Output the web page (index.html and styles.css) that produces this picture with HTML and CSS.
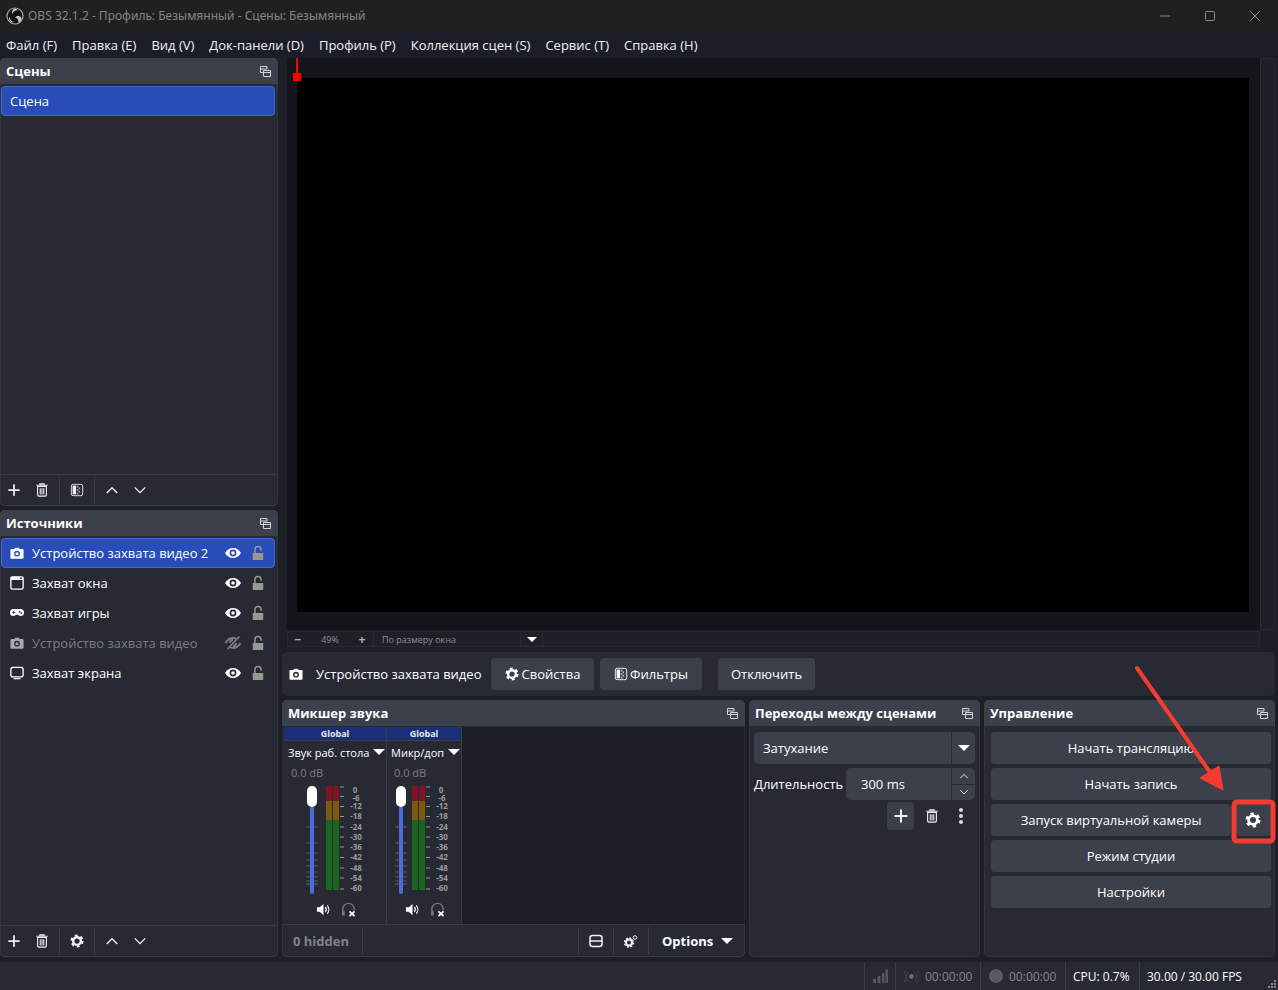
FILE: index.html

```html
<!DOCTYPE html>
<html lang="ru">
<head>
    <meta charset="UTF-8">
    <meta name="viewport" content="width=device-width, initial-scale=1.0">
    <title>OBS 32.1.2</title>
    <link rel="stylesheet" href="styles.css">
</head>
<body>
    <!-- Shared icons -->
    <svg class="icon-defs" width="0" height="0">
        <symbol id="i-plus" viewBox="0 0 16 16"><path d="M8 1.5v13M1.5 8h13" stroke="currentColor" stroke-width="2" fill="none"/></symbol>
        <symbol id="i-trash" viewBox="0 0 16 16"><path d="M1.5 2.5h13M5.5 2.5V1h5v1.5" stroke="currentColor" stroke-width="1.2" fill="none"/><path d="M3 4h10v9.5a1.5 1.5 0 0 1-1.500 1.500h-7a1.500 1.500 0 0 1-1.500-1.500z" stroke="currentColor" stroke-width="1.300" fill="none"/><path d="M6 6v7M8 6v7M10 6v7" stroke="currentColor" stroke-width="1.200"/></symbol>
        <symbol id="i-filter" viewBox="0 0 16 16"><rect x="1.500" y="1.500" width="13" height="13" rx="2" stroke="currentColor" fill="none"/><path d="M3 3h4v10H3z" fill="currentColor"/><path d="M8 3h1.500v2H8zM10 5h1.500v2H10zM8 7h1.500v2H8zM10 9h1.500v2H10zM8 11h1.500v2H8z" fill="currentColor" opacity=".7"/></symbol>
        <symbol id="i-up" viewBox="0 0 16 16"><path d="M2 11.500 8 5.500l6 6" stroke="currentColor" stroke-width="1.600" fill="none"/></symbol>
        <symbol id="i-down" viewBox="0 0 16 16"><path d="M2 5 8 11l6-6" stroke="currentColor" stroke-width="1.600" fill="none"/></symbol>
        <symbol id="i-gear" viewBox="0 0 16 16"><circle cx="8" cy="8" r="4.400" stroke="currentColor" stroke-width="2.800" fill="none"/><circle cx="8" cy="8" r="6.300" stroke="currentColor" stroke-width="2.400" stroke-dasharray="3.300 3.300" fill="none"/></symbol>
        <symbol id="i-undock" viewBox="0 0 11 11"><path d="M.5.500h6.500v2.500H.5zM.5 3v3.500h3M3.500 4.500h7v6h-7zM3.500 6.500h7" stroke="currentColor" fill="none"/></symbol>
        <symbol id="i-camera" viewBox="0 0 16 16"><path d="M1.500 3.500H5L6 2h4l1 1.500h3.500a1 1 0 0 1 1 1v9a1 1 0 0 1-1 1h-13a1 1 0 0 1-1-1v-9a1 1 0 0 1 1-1zM8 5.500a3.300 3.300 0 1 0 0 6.600 3.300 3.300 0 0 0 0-6.600zM8 7a1.800 1.800 0 1 1 0 3.600A1.800 1.800 0 0 1 8 7z" fill="currentColor" fill-rule="evenodd"/></symbol>
        <symbol id="i-window" viewBox="0 0 16 16"><rect x="1" y="1" width="14" height="14" rx="1.500" stroke="currentColor" stroke-width="1.500" fill="none"/><path d="M1 1h14v3.500H1z" fill="currentColor"/><path d="m11.500 1.500 2 2M13.500 1.500l-2 2" stroke="#272a33"/></symbol>
        <symbol id="i-game" viewBox="0 0 16 16"><path d="M4 3.500h8a4 4 0 0 1 0 8c-1.500 0-2-1.500-3-1.500H7c-1 0-1.500 1.500-3 1.500a4 4 0 0 1 0-8z" fill="currentColor"/><path d="M2.500 7.300h3.500M4.200 5.600v3.400" stroke="#272a33"/><circle cx="11" cy="6.500" r="1" fill="#272a33"/><circle cx="12.800" cy="8" r="1" fill="#272a33"/></symbol>
        <symbol id="i-screen" viewBox="0 0 16 16"><rect x="1" y="1.500" width="14" height="11" rx="2.500" stroke="currentColor" stroke-width="1.500" fill="none"/><path d="M4 14.500h8" stroke="currentColor" stroke-width="1.300"/></symbol>
        <symbol id="i-eye" viewBox="0 0 16 16"><path d="M0 8c2-3.500 4.800-5 8-5s6 1.500 8 5c-2 3.500-4.800 5-8 5s-6-1.500-8-5zm8-3.400a3.400 3.400 0 1 0 0 6.800 3.400 3.400 0 0 0 0-6.800zM8 6.200a1.800 1.800 0 1 1 0 3.600 1.800 1.800 0 0 1 0-3.600z" fill="currentColor" fill-rule="evenodd"/></symbol>
        <symbol id="i-eye-off" viewBox="0 0 16 16"><path d="M.5 8C2.500 4.500 5 3 8 3c1.200 0 2.300.200 3.300.700M15.500 8c-2 3.500-4.500 5-7.500 5-1.200 0-2.300-.200-3.300-.700M5 8a3 3 0 0 1 3-3M11 8a3 3 0 0 1-3 3" stroke="currentColor" stroke-width="1.800" fill="none"/><path d="M2.500 14 14.500 1.500" stroke="currentColor" stroke-width="1.800"/></symbol>
        <symbol id="i-lock" viewBox="0 0 16 16"><path d="M2 8h12v7a1 1 0 0 1-1 1H3a1 1 0 0 1-1-1z" fill="currentColor"/><path d="M4.500 8V4a3.500 3.500 0 0 1 7 0v1.500" stroke="currentColor" stroke-width="1.700" fill="none"/></symbol>
        <symbol id="i-speaker" viewBox="0 0 16 16"><path d="M1 5.500h3L8 2v12l-4-3.500H1z" fill="currentColor"/><path d="M10 5.500a4 4 0 0 1 0 5M12 3.500a7 7 0 0 1 0 9" stroke="currentColor" stroke-width="1.300" fill="none"/></symbol>
        <symbol id="i-headset" viewBox="0 0 16 16"><path d="M2 12V7.500a6 6 0 0 1 12 0V9" stroke="currentColor" stroke-width="1.500" fill="none"/><path d="M1 9.500h3v5H1z" fill="currentColor"/><path d="m9 10 5.500 5M14.500 10 9 15" stroke="#fff" stroke-width="1.800"/></symbol>
        <symbol id="i-fader" viewBox="0 0 18 110"><path d="M2 41h12M2 57h12M2 67h12M2 74h12M2 80h12M2 86h12M2 91h12M2 95h12M2 98h12" stroke="#5b5e68"/><rect x="6" y="20" width="4" height="88" rx="2" fill="#4a6cdc"/><rect x="3" y="0" width="10" height="21" rx="5" fill="#fff"/></symbol>
        <symbol id="i-meter" viewBox="0 0 18 110">
            <path d="M0 0h6v15H0zM7 0h6v15H7z" fill="#7d1426"/>
            <path d="M0 15h6v19H0zM7 15h6v19H7z" fill="#7b5a10"/>
            <path d="M0 34h6v70H0zM7 34h6v70H7z" fill="#1a6620"/>
            <path d="M14 1h4M14 10.500h4M14 20.500h4M14 30.500h4M14 41h4M14 51h4M14 61h4M14 71.500h4M14 82h4M14 92h4M14 103h4" stroke="#9a9a9a"/>
        </symbol>
    </svg>

    <!-- Title bar -->
    <header class="title-bar">
        <svg class="obs-logo" width="18" height="18" viewBox="0 0 18 18">
            <circle cx="9" cy="9" r="8" fill="#111" stroke="#a8a8a8" stroke-width="1.200"/>
            <path d="M9.500 1.500a3.600 3.600 0 0 0-3 5.500 4.500 4.500 0 0 1 5-3.500 4 4 0 0 0-2-2zM15.500 11a3.600 3.600 0 0 0-6.300-.500 4.500 4.500 0 0 1 3 5 4 4 0 0 0 3.300-4.500zM3 12a3.600 3.600 0 0 0 5.800 2.600 4.500 4.500 0 0 1-5.200-4.800A4 4 0 0 0 3 12z" fill="#c8c8c8"/>
        </svg>
        <span class="title-text">OBS 32.1.2 - Профиль: Безымянный - Сцены: Безымянный</span>
        <div class="win-controls">
            <svg width="10" height="10" viewBox="0 0 10 10"><path d="M0 5h10" stroke="#8c8c8c"/></svg>
            <svg width="10" height="10" viewBox="0 0 10 10"><rect x=".5" y=".5" width="9" height="9" rx="1" stroke="#8c8c8c" fill="none"/></svg>
            <svg width="10" height="10" viewBox="0 0 10 10"><path d="m0 0 10 10M10 0 0 10" stroke="#8c8c8c"/></svg>
        </div>
    </header>

    <!-- Menu -->
    <nav class="menu-bar">
        <span>Файл (F)</span>
        <span>Правка (E)</span>
        <span>Вид (V)</span>
        <span>Док-панели (D)</span>
        <span>Профиль (P)</span>
        <span>Коллекция сцен (S)</span>
        <span>Сервис (T)</span>
        <span>Справка (H)</span>
    </nav>

    <main class="workspace">
        <div class="left-col">
            <section class="dock">
                <div class="dock-head">
                    <h2>Сцены</h2>
                    <svg class="undock"><use href="#i-undock"/></svg>
                </div>
                <div class="list">
                    <div class="row selected"><span class="row-name">Сцена</span></div>
                </div>
                <div class="toolbar">
                    <button class="tool"><svg><use href="#i-plus"/></svg></button>
                    <button class="tool"><svg><use href="#i-trash"/></svg></button>
                    <i class="tool-sep"></i>
                    <button class="tool"><svg><use href="#i-filter"/></svg></button>
                    <i class="tool-sep"></i>
                    <button class="tool"><svg><use href="#i-up"/></svg></button>
                    <button class="tool"><svg><use href="#i-down"/></svg></button>
                </div>
            </section>

            <section class="dock">
                <div class="dock-head">
                    <h2>Источники</h2>
                    <svg class="undock"><use href="#i-undock"/></svg>
                </div>
                <div class="list">
                    <div class="row selected">
                        <svg class="src-icon"><use href="#i-camera"/></svg>
                        <span class="row-name">Устройство захвата видео 2</span>
                        <svg class="src-eye"><use href="#i-eye"/></svg>
                        <svg class="src-lock"><use href="#i-lock"/></svg>
                    </div>
                    <div class="row">
                        <svg class="src-icon"><use href="#i-window"/></svg>
                        <span class="row-name">Захват окна</span>
                        <svg class="src-eye"><use href="#i-eye"/></svg>
                        <svg class="src-lock"><use href="#i-lock"/></svg>
                    </div>
                    <div class="row">
                        <svg class="src-icon"><use href="#i-game"/></svg>
                        <span class="row-name">Захват игры</span>
                        <svg class="src-eye"><use href="#i-eye"/></svg>
                        <svg class="src-lock"><use href="#i-lock"/></svg>
                    </div>
                    <div class="row hidden-src">
                        <svg class="src-icon"><use href="#i-camera"/></svg>
                        <span class="row-name">Устройство захвата видео</span>
                        <svg class="src-eye"><use href="#i-eye-off"/></svg>
                        <svg class="src-lock"><use href="#i-lock"/></svg>
                    </div>
                    <div class="row">
                        <svg class="src-icon"><use href="#i-screen"/></svg>
                        <span class="row-name">Захват экрана</span>
                        <svg class="src-eye"><use href="#i-eye"/></svg>
                        <svg class="src-lock"><use href="#i-lock"/></svg>
                    </div>
                </div>
                <div class="toolbar">
                    <button class="tool"><svg><use href="#i-plus"/></svg></button>
                    <button class="tool"><svg><use href="#i-trash"/></svg></button>
                    <i class="tool-sep"></i>
                    <button class="tool"><svg><use href="#i-gear"/></svg></button>
                    <i class="tool-sep"></i>
                    <button class="tool"><svg><use href="#i-up"/></svg></button>
                    <button class="tool"><svg><use href="#i-down"/></svg></button>
                </div>
            </section>
        </div>

        <div class="right-col">
            <!-- Preview -->
            <div class="preview-wrap">
                <div class="preview-row">
                    <div class="preview">
                        <div class="canvas"></div>
                        <i class="handle-line"></i>
                        <i class="handle"></i>
                    </div>
                    <div class="preview-scroll"></div>
                </div>
                <div class="zoom-bar">
                    <span class="zoom-btn">−</span>
                    <span class="zoom-val">49%</span>
                    <span class="zoom-btn">+</span>
                    <span class="zoom-mode">По размеру окна</span>
                    <span class="zoom-arrow"><i class="caret small"></i></span>
                </div>
            </div>

            <!-- Context bar -->
            <div class="context-bar">
                <svg class="ctx-icon"><use href="#i-camera"/></svg>
                <span class="ctx-name">Устройство захвата видео</span>
                <button class="btn ctx-props"><svg><use href="#i-gear"/></svg>Свойства</button>
                <button class="btn ctx-filters"><svg><use href="#i-filter"/></svg>Фильтры</button>
                <button class="btn ctx-off">Отключить</button>
            </div>

            <!-- Bottom docks -->
            <div class="bottom-docks">
                <section class="dock mixer-dock">
                    <div class="dock-head">
                        <h2>Микшер звука</h2>
                        <svg class="undock"><use href="#i-undock"/></svg>
                    </div>
                    <div class="mixer">
                        <div class="channel ch-wide">
                            <div class="ch-tag">Global</div>
                            <div class="ch-name">Звук раб. стола<i class="caret"></i></div>
                            <div class="ch-db">0.0 dB</div>
                            <div class="ch-body">
                                <svg class="fader"><use href="#i-fader"/></svg>
                                <svg class="meter"><use href="#i-meter"/></svg>
                                <div class="scale">
                                    <span class="first">0</span><span class="second">-6</span><span>-12</span><span>-18</span><span>-24</span><span>-30</span><span>-36</span><span>-42</span><span>-48</span><span>-54</span><span>-60</span>
                                </div>
                            </div>
                            <div class="ch-foot">
                                <svg class="ch-speaker"><use href="#i-speaker"/></svg>
                                <svg class="ch-phones"><use href="#i-headset"/></svg>
                            </div>
                        </div>
                        <div class="channel ch-narrow">
                            <div class="ch-tag">Global</div>
                            <div class="ch-name">Микр/доп<i class="caret"></i></div>
                            <div class="ch-db">0.0 dB</div>
                            <div class="ch-body">
                                <svg class="fader"><use href="#i-fader"/></svg>
                                <svg class="meter"><use href="#i-meter"/></svg>
                                <div class="scale">
                                    <span class="first">0</span><span class="second">-6</span><span>-12</span><span>-18</span><span>-24</span><span>-30</span><span>-36</span><span>-42</span><span>-48</span><span>-54</span><span>-60</span>
                                </div>
                            </div>
                            <div class="ch-foot">
                                <svg class="ch-speaker"><use href="#i-speaker"/></svg>
                                <svg class="ch-phones"><use href="#i-headset"/></svg>
                            </div>
                        </div>
                    </div>
                    <div class="mixer-foot">
                        <span class="mix-hidden">0 hidden</span>
                        <i class="foot-sep"></i>
                        <span class="foot-space"></span>
                        <i class="foot-sep"></i>
                        <span class="foot-cell">
                            <svg width="14" height="14" viewBox="0 0 14 14"><rect x="1" y="1.500" width="12" height="11" rx="2.500" stroke="currentColor" stroke-width="1.500" fill="none"/><path d="M1 7h12" stroke="currentColor" stroke-width="1.500"/></svg>
                        </span>
                        <i class="foot-sep"></i>
                        <span class="foot-cell">
                            <svg width="14" height="14" viewBox="0 0 14 14"><circle cx="5" cy="8.500" r="3" stroke="currentColor" stroke-width="2" fill="none"/><circle cx="5" cy="8.500" r="4.500" stroke="currentColor" stroke-width="1.400" stroke-dasharray="2 1.500" fill="none"/><circle cx="11" cy="3.500" r="1.800" stroke="currentColor" fill="none"/></svg>
                        </span>
                        <i class="foot-sep"></i>
                        <span class="mix-options">Options<i class="caret"></i></span>
                    </div>
                </section>

                <section class="dock trans-dock">
                    <div class="dock-head">
                        <h2>Переходы между сценами</h2>
                        <svg class="undock"><use href="#i-undock"/></svg>
                    </div>
                    <div class="trans-body">
                        <div class="combo">
                            <span class="combo-text">Затухание</span>
                            <span class="combo-arrow"><i class="caret"></i></span>
                        </div>
                        <div class="trans-row">
                            <span class="trans-label">Длительность</span>
                            <div class="spin">
                                <span class="spin-text">300 ms</span>
                                <span class="spin-arrows">
                                    <span><svg><use href="#i-up"/></svg></span>
                                    <span><svg><use href="#i-down"/></svg></span>
                                </span>
                            </div>
                        </div>
                        <div class="trans-tools">
                            <button class="tool boxed"><svg><use href="#i-plus"/></svg></button>
                            <button class="tool"><svg><use href="#i-trash"/></svg></button>
                            <span class="dots"><i></i><i></i><i></i></span>
                        </div>
                    </div>
                </section>

                <section class="dock ctrl-dock">
                    <div class="dock-head">
                        <h2>Управление</h2>
                        <svg class="undock"><use href="#i-undock"/></svg>
                    </div>
                    <div class="ctrl-body">
                        <button class="btn">Начать трансляцию</button>
                        <button class="btn">Начать запись</button>
                        <div class="vcam-row">
                            <button class="btn vcam-main">Запуск виртуальной камеры</button>
                            <button class="btn vcam-gear"><svg><use href="#i-gear"/></svg></button>
                        </div>
                        <button class="btn">Режим студии</button>
                        <button class="btn">Настройки</button>
                    </div>
                </section>
            </div>
        </div>
    </main>

    <!-- Status bar -->
    <footer class="status-bar">
        <span class="stat stat-net">
            <svg width="16" height="16" viewBox="0 0 16 16"><path d="M1 11h3v4H1zM5.500 8h3v7h-3zM10 5h2.500v10H10zM13.500 1.500H16V15h-2.500z" fill="#55575e"/></svg>
        </span>
        <span class="stat stat-live">
            <svg width="15" height="15" viewBox="0 0 15 15"><circle cx="7.500" cy="7.500" r="2.400" fill="#6a6c72"/><path d="M4 3.500a5.500 5.500 0 0 0 0 8M11 3.500a5.500 5.500 0 0 1 0 8M2 1.500a8.500 8.500 0 0 0 0 12M13 1.500a8.500 8.500 0 0 1 0 12" stroke="#4a4c53" fill="none"/></svg>
            00:00:00
        </span>
        <span class="stat stat-rec"><i class="rec-dot"></i>00:00:00</span>
        <span class="stat stat-cpu">CPU: 0.7%</span>
        <span class="stat stat-fps">30.00 / 30.00 FPS</span>
        <svg class="grip" width="10" height="10" viewBox="0 0 10 10"><path d="M7 1h2v2H7zM4 4h2v2H4zM7 4h2v2H7zM1 7h2v2H1zM4 7h2v2H4zM7 7h2v2H7z" fill="#8b8d92"/></svg>
    </footer>

    <!-- Red annotation over the window -->
    <svg class="annot" width="1278" height="990" viewBox="0 0 1278 990">
        <path d="M1137 668 1214 778" stroke="#f63b30" stroke-width="4" stroke-linecap="round"/>
        <path d="M1223 790 1200 778 1219 766z" fill="#f63b30" stroke="#f63b30" stroke-linejoin="round"/>
        <rect x="1234" y="802" width="39" height="39" rx="3" fill="none" stroke="#f63b30" stroke-width="5"/>
    </svg>
</body>
</html>
```

FILE: styles.css

```css
* {
    margin: 0;
    padding: 0;
    box-sizing: border-box;
}

html, body {
    height: 990px;
    overflow: hidden;
}

body {
    font-family: "Open Sans", "Noto Sans", sans-serif;
    font-size: 13px;
    color: #fff;
    background-color: #1d1f26;
    display: flex;
    flex-direction: column;
    position: relative;
}

.icon-defs {
    position: absolute;
}

button {
    font: inherit;
    color: inherit;
    border: none;
    background: none;
}

/* Title bar */
.title-bar {
    height: 31px;
    flex-shrink: 0;
    background-color: #202020;
    display: flex;
    align-items: center;
    padding-left: 6px;
    border-top-right-radius: 8px;
    border-top-left-radius: 8px;
}

.obs-logo {
    margin-right: 4px;
}

.title-text {
    font-family: "Noto Sans", "Open Sans", sans-serif;
    font-size: 12px;
    color: #858585;
}

.win-controls {
    margin-left: auto;
    display: flex;
    gap: 35px;
    padding-right: 18px;
}

/* Menu */
.menu-bar {
    height: 27px;
    flex-shrink: 0;
    background-color: #1b1e29;
    display: flex;
    align-items: center;
    gap: 15px;
    padding-left: 6px;
    color: #f2f2f2;
}

.workspace {
    flex: 1;
    min-height: 0;
    display: flex;
    gap: 4px;
    padding-right: 3px;
}

.left-col {
    width: 278px;
    flex-shrink: 0;
    display: flex;
    flex-direction: column;
    gap: 4px;
}

.left-col .dock:first-child {
    height: 448px;
}

.left-col .dock:last-child {
    height: 447px;
}

.right-col {
    flex: 1;
    min-width: 0;
    display: flex;
    flex-direction: column;
}

/* Docks */
.dock {
    background-color: #272a33;
    border-radius: 5px;
    display: flex;
    flex-direction: column;
    box-shadow: inset 0 0 0 1px #32353e;
}

.dock-head {
    height: 26px;
    flex-shrink: 0;
    background-color: #3c404b;
    border-radius: 5px 5px 0 0;
    display: flex;
    align-items: center;
    justify-content: space-between;
    padding: 0 7px 0 6px;
}

.dock-head h2 {
    font-size: 13px;
    font-weight: 700;
}

.undock {
    width: 11px;
    height: 11px;
    color: #d4d4d6;
}

.list {
    flex: 1;
    padding: 2px 3px 0 1px;
}

.row {
    height: 30px;
    display: flex;
    align-items: center;
    padding-left: 8px;
    border: 1px solid transparent;
    border-radius: 4px;
}

.row.selected {
    background-color: #284cb8;
    border-color: #4468d0;
}

.row-name {
    flex: 1;
}

.src-icon {
    width: 14px;
    height: 14px;
    margin-right: 8px;
}

.src-eye {
    width: 16px;
    height: 16px;
    margin-right: 10px;
}

.src-lock {
    width: 14px;
    height: 16px;
    margin-right: 9px;
    color: #999791;
}

.hidden-src .row-name,
.hidden-src .src-icon,
.hidden-src .src-eye {
    color: #7c7e83;
    opacity: 1;
}

.hidden-src .src-icon {
    color: #a8a9ad;
}

/* Toolbars */
.toolbar {
    height: 32px;
    flex-shrink: 0;
    display: flex;
    align-items: center;
    border-top: 1px solid #3a3d47;
    border-bottom: 1px solid #3a3d47;
    border-radius: 0 0 5px 5px;
    padding-left: 0;
}

.tool {
    width: 28px;
    height: 28px;
    display: flex;
    align-items: center;
    justify-content: center;
    color: #f0f0f0;
}

.tool svg {
    width: 14px;
    height: 14px;
}

.tool-sep {
    width: 1px;
    height: 27px;
    background-color: #3a3d47;
    margin: 0 3px;
}

/* Preview */
.preview-wrap {
    flex: 1;
    min-height: 0;
    display: flex;
    flex-direction: column;
    padding-left: 5px;
}

.preview-row {
    flex: 1;
    display: flex;
}

.preview {
    flex: 1;
    background-color: #14151a;
    padding: 20px 11px 18px 10px;
    position: relative;
}

.canvas {
    height: 100%;
    background-color: #000;
}

.handle-line {
    position: absolute;
    left: 9px;
    top: 0;
    width: 2px;
    height: 20px;
    background-color: #f00;
}

.handle {
    position: absolute;
    left: 6px;
    top: 15px;
    width: 8px;
    height: 8px;
    background-color: #f00;
}

.preview-scroll {
    width: 15px;
    background-color: #1d2027;
    border: 1px solid #272a33;
}

.zoom-bar {
    height: 16px;
    margin-top: 1px;
    margin-right: 15px;
    display: flex;
    align-items: center;
    font-size: 9px;
    color: #8d8f94;
    background-color: #1d2027;
    border: 1px solid #272a33;
}

.zoom-btn {
    width: 20px;
    text-align: center;
    font-size: 12px;
    font-weight: 700;
    color: #b0b0b0;
}

.zoom-val {
    width: 44px;
    text-align: center;
}

.zoom-mode {
    width: 147px;
    height: 100%;
    display: flex;
    align-items: center;
    padding-left: 8px;
    margin-left: 1px;
    border-left: 1px solid #272a33;
}

.zoom-arrow {
    width: 23px;
    height: 100%;
    display: flex;
    align-items: center;
    justify-content: center;
    border: solid #272a33;
    border-width: 0 1px;
}

.caret {
    display: inline-block;
    width: 0;
    height: 0;
    border-left: 6px solid transparent;
    border-right: 6px solid transparent;
    border-top: 6px solid #fff;
}

.caret.small {
    border-left-width: 5px;
    border-right-width: 5px;
    border-top-width: 5px;
}

/* Context bar */
.context-bar {
    height: 44px;
    flex-shrink: 0;
    margin-top: 5px;
    background-color: #272a33;
    border-radius: 5px;
    display: flex;
    align-items: center;
    padding-left: 7px;
}

.ctx-icon {
    width: 14px;
    height: 14px;
    margin-right: 13px;
}

.ctx-name {
    width: 175px;
}

.btn {
    height: 32px;
    background-color: #3c404b;
    border-radius: 4px;
    display: flex;
    align-items: center;
    justify-content: center;
    flex-shrink: 0;
}

.ctx-props {
    width: 103px;
    gap: 3px;
}

.ctx-filters {
    width: 102px;
    margin-left: 6px;
    gap: 2px;
}

.ctx-off {
    width: 97px;
    margin-left: 16px;
}

.ctx-props svg,
.ctx-filters svg {
    width: 14px;
    height: 14px;
}

/* Bottom docks */
.bottom-docks {
    height: 257px;
    flex-shrink: 0;
    margin-top: 4px;
    margin-bottom: 5px;
    display: flex;
    gap: 4px;
}

.mixer-dock {
    width: 463px;
}

.trans-dock {
    width: 231px;
}

.ctrl-dock {
    flex: 1;
}

/* Mixer */
.mixer {
    flex: 1;
    min-height: 0;
    display: flex;
    padding: 1px 0 0 2px;
    background-color: #272a33;
}

.channel {
    border-right: 1px solid #3a3d47;
    display: flex;
    flex-direction: column;
    background-color: #272a33;
}

.ch-wide {
    width: 103px;
}

.ch-narrow {
    width: 75px;
}

.mixer::after {
    content: "";
    flex: 1;
    background-color: #1d1f26;
    margin-right: 1px;
}

.ch-tag {
    height: 14px;
    flex-shrink: 0;
    background-color: #1a2f78;
    color: #e8e8e8;
    font-size: 9px;
    font-weight: 700;
    line-height: 14px;
    text-align: center;
    border-bottom: 1px solid #3a3d47;
}

.ch-name {
    height: 22px;
    flex-shrink: 0;
    font-size: 11px;
    display: flex;
    align-items: center;
    justify-content: space-between;
    padding: 0 1px 0 4px;
    white-space: nowrap;
}

.ch-db {
    height: 20px;
    flex-shrink: 0;
    font-size: 11px;
    line-height: 20px;
    color: #7d7f85;
    padding-left: 7px;
}

.ch-body {
    height: 110px;
    margin-top: 3px;
    display: flex;
    flex-shrink: 0;
}

.fader {
    width: 18px;
    height: 110px;
    margin-left: 20px;
}

.meter {
    width: 18px;
    height: 110px;
    margin-left: 4px;
}

.ch-narrow .fader {
    margin-left: 6px;
}

.ch-narrow .meter {
    margin-left: -2px;
    margin-left: 1px;
}

.scale {
    display: flex;
    flex-direction: column;
    font-size: 8px;
    font-weight: 700;
    color: #9a9a9a;
    margin-left: 2px;
    width: 20px;
}

.scale span {
    height: 10.3px;
    line-height: 10.3px;
    text-align: center;
}

.scale .first {
    height: 8px;
    line-height: 8px;
    margin-left: -2px;
}

.scale .second {
    height: 7px;
    line-height: 7px;
}

.ch-foot {
    display: flex;
    align-items: center;
    gap: 10px;
    padding-left: 32px;
    margin-top: 6px;
}

.ch-narrow .ch-foot {
    padding-left: 18px;
}

.ch-speaker,
.ch-phones {
    width: 15px;
    height: 15px;
}

.ch-phones {
    color: #74767b;
}

.mixer-foot {
    height: 33px;
    flex-shrink: 0;
    display: flex;
    align-items: center;
    border-top: 1px solid #3a3d47;
    border-bottom: 1px solid #3a3d47;
    border-radius: 0 0 5px 5px;
}

.mix-hidden {
    width: 80px;
    padding-left: 11px;
    font-weight: 700;
    color: #80828a;
}

.foot-sep {
    width: 1px;
    height: 27px;
    background-color: #3a3d47;
}

.foot-space {
    width: 215px;
}

.foot-cell {
    width: 34px;
    display: flex;
    justify-content: center;
    color: #f0f0f0;
}

.mix-options {
    flex: 1;
    display: flex;
    align-items: center;
    gap: 8px;
    padding-left: 13px;
    font-weight: 700;
}

/* Transitions */
.trans-body {
    padding: 6px 5px 0;
    display: flex;
    flex-direction: column;
    gap: 4px;
}

.combo {
    height: 32px;
    background-color: #3c404b;
    border-radius: 5px;
    display: flex;
    align-items: center;
}

.combo-text {
    flex: 1;
    padding-left: 9px;
}

.combo-arrow {
    width: 24px;
    height: 100%;
    display: flex;
    align-items: center;
    justify-content: center;
    border-left: 1px solid #272a33;
}

.trans-row {
    display: flex;
    align-items: center;
    gap: 4px;
}

.trans-label {
    width: 88px;
    white-space: nowrap;
}

.spin {
    flex: 1;
    height: 32px;
    background-color: #3c404b;
    border-radius: 5px;
    display: flex;
    align-items: center;
}

.spin-text {
    flex: 1;
    padding-left: 15px;
}

.spin-arrows {
    width: 24px;
    height: 100%;
    display: flex;
    flex-direction: column;
    border-left: 1px solid #272a33;
}

.spin-arrows span {
    flex: 1;
    display: flex;
    align-items: center;
    justify-content: center;
    color: #e8e8e8;
}

.spin-arrows span:first-child {
    border-bottom: 1px solid #272a33;
}

.spin-arrows svg {
    width: 10px;
    height: 10px;
}

.trans-tools {
    display: flex;
    justify-content: flex-end;
    align-items: center;
    margin-top: -2px;
    padding-right: 0;
}

.tool.boxed {
    background-color: #3c404b;
    border-radius: 4px;
    width: 27px;
}

.tool.boxed svg {
    width: 16px;
    height: 16px;
}

.trans-tools .tool:nth-child(2) {
    margin-left: 4px;
}

.dots {
    width: 28px;
    display: flex;
    flex-direction: column;
    align-items: center;
    gap: 2px;
    margin-left: 1px;
}

.dots i {
    width: 4px;
    height: 4px;
    border-radius: 50%;
    background-color: #dcdcdc;
}

/* Controls */
.ctrl-body {
    padding: 6px 4px 0 7px;
    display: flex;
    flex-direction: column;
    gap: 4px;
}

.vcam-row {
    display: flex;
    gap: 4px;
}

.vcam-main {
    flex: 1;
}

.vcam-gear {
    width: 36px;
}

.vcam-gear svg {
    width: 16px;
    height: 16px;
}

/* Status bar */
.status-bar {
    height: 28px;
    flex-shrink: 0;
    background-color: #272a33;
    display: flex;
    align-items: center;
    justify-content: flex-end;
    position: relative;
    color: #fff;
    font-size: 12px;
}

.stat {
    height: 100%;
    display: flex;
    align-items: center;
    gap: 6px;
    border-left: 1px solid #3a3d47;
    padding-left: 7px;
    white-space: nowrap;
}

.stat-net {
    width: 31px;
}

.stat-live {
    width: 85px;
    color: #85878c;
    padding-left: 8px;
}

.stat-rec {
    width: 85px;
    color: #85878c;
    padding-left: 8px;
}

.stat-cpu {
    width: 74px;
}

.stat-fps {
    width: 139px;
}

.rec-dot {
    width: 14px;
    height: 14px;
    border-radius: 50%;
    background-color: #585a62;
}

.grip {
    position: absolute;
    right: 1px;
    bottom: 1px;
}

/* Annotation */
.annot {
    position: absolute;
    left: 0;
    top: 0;
    pointer-events: none;
}
```
